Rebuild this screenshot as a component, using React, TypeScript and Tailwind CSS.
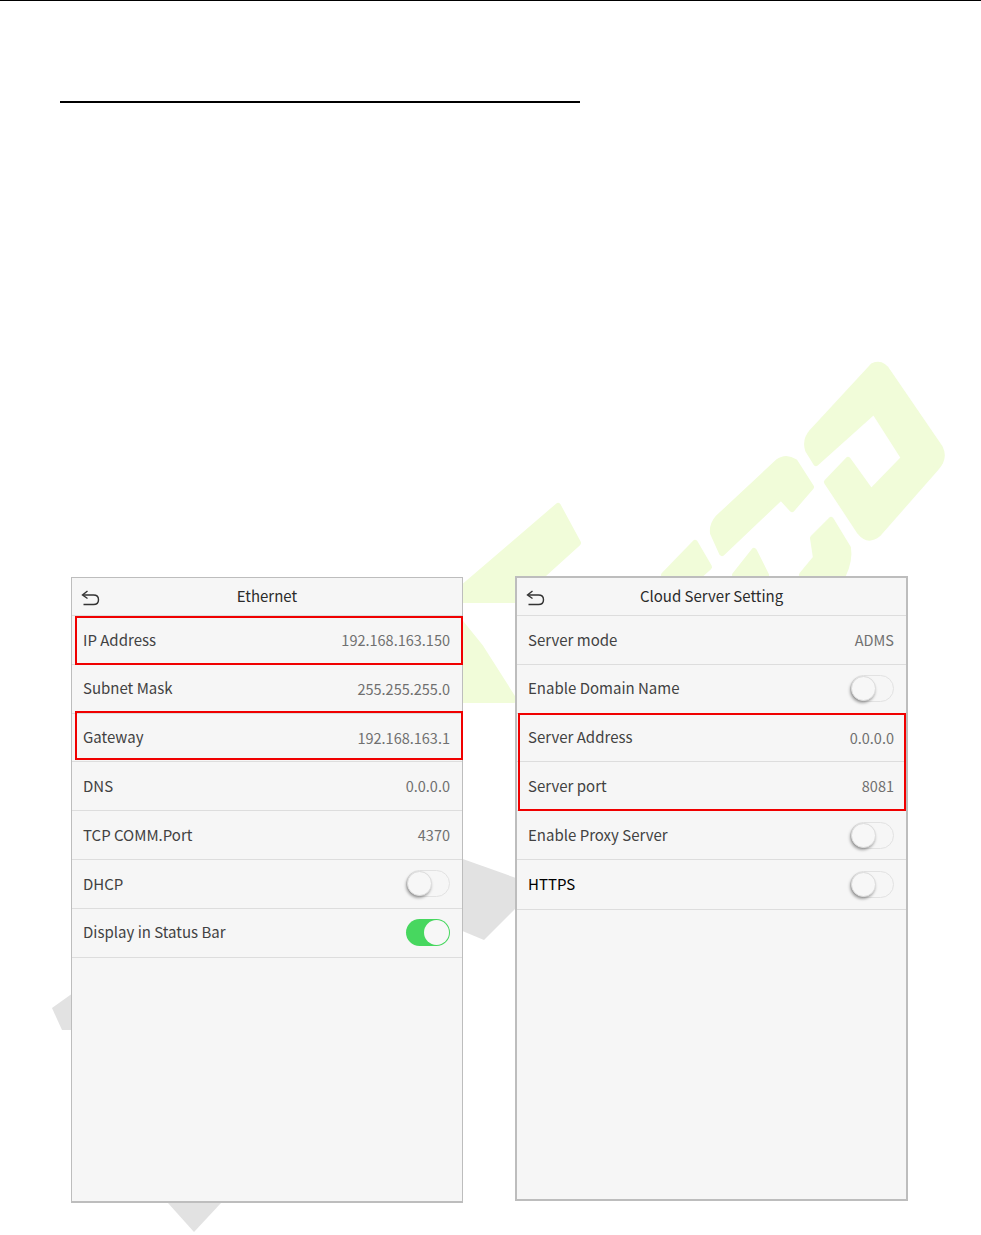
const font = { fontFamily: '"Noto Sans CJK SC", "Noto Sans", sans-serif' };

const ethernet: Row[] = [
  { label: "IP Address", value: "192.168.163.150" },
  { label: "Subnet Mask", value: "255.255.255.0" },
  { label: "Gateway", value: "192.168.163.1" },
  { label: "DNS", value: "0.0.0.0" },
  { label: "TCP COMM.Port", value: "4370" },
  { label: "DHCP", toggle: "off" },
  { label: "Display in Status Bar", toggle: "on" },
];

const cloud: Row[] = [
  { label: "Server mode", value: "ADMS" },
  { label: "Enable Domain Name", toggle: "off" },
  { label: "Server Address", value: "0.0.0.0" },
  { label: "Server port", value: "8081" },
  { label: "Enable Proxy Server", toggle: "off" },
  { label: "HTTPS", toggle: "off", tall: true },
];

type Row = { label: string; value?: string; toggle?: "on" | "off"; tall?: boolean };

const BackIcon = () => (
  <svg width="19" height="16" viewBox="0 0 19 16" fill="none" stroke="#333" strokeWidth="1.4">
    <path d="M6.5 1 L1.5 5 L6.5 8.5" />
    <path d="M2 5 H12.5 C15.5 5 17.5 7 17.5 9.7 C17.5 12.6 15.5 14.5 12.5 14.5 H2.5" />
  </svg>
);

const Toggle = ({ on }: { on: boolean }) =>
  on ? (
    <div className="w-[44px] h-[27px] rounded-full bg-[#47d75f] flex items-center justify-end pr-[1px]">
      <div className="w-[25px] h-[25px] rounded-full bg-[#f7f7f7]" />
    </div>
  ) : (
    <div className="w-[44px] h-[27px] rounded-full border border-[#e2e2e2] flex items-center">
      <div className="w-[25px] h-[25px] rounded-full bg-[#f7f7f7] border border-[#dcdcdc] shadow-[-1px_2px_3px_rgba(0,0,0,0.35)]" />
    </div>
  );

const Panel = ({ title, rows, className, rowH, children }: { title: string; rows: Row[]; className: string; rowH: string; children: React.ReactNode }) => (
  <div className={`relative border-[#bdbdbd] bg-[#f6f6f6] flex flex-col ${className}`} style={font}>
    <div className="relative h-[38px] shrink-0 border-b border-[#dddddd] flex items-center justify-center text-[15px] text-[#2b2b2b]">
      <div className="absolute left-[9px] top-[12px]">
        <BackIcon />
      </div>
      {title}
    </div>
    {rows.map((r) => (
      <div
        key={r.label}
        className={`${r.tall ? "h-[50px]" : rowH} shrink-0 border-b border-[#dddddd] flex items-center justify-between pl-[11px] pr-[12px] text-[15px] ${r.tall ? "text-black" : "text-[#424242]"}`}
      >
        <span>{r.label}</span>
        {r.value && <span className="text-[#707070] text-[14.5px]">{r.value}</span>}
        {r.toggle && <Toggle on={r.toggle === "on"} />}
      </div>
    ))}
    {children}
  </div>
);

const Watermark = () => (
  <svg className="absolute left-0 top-0" width="981" height="1235" viewBox="0 0 981 1235">
    <g fill="#f1fcd9" stroke="#f1fcd9" strokeWidth="6" strokeLinejoin="round">
      <path d="M558 506 L578 543 L515 600 L460 600 L460 590 Z" />
      <path d="M460 622 L481 648 L514 700 L460 700 Z" />
      <path d="M873 366 Q882 362 888 372 L940 448 Q945 458 936 468 L878 534 Q868 542 860 532 L827 482 L848 460 L871 492 L904 458 L874 411 L816 463 L808 450 Q805 440 812 432 Z" />
      <path d="M778 462 Q786 456 795 462 L811 487 L792 509 L781 497 L722 553 L713 533 Q712 525 718 518 Z" />
      <path d="M831 520 L848 548 Q850 560 843 575 L802 575 L816 558 L813 538 Z" />
      <path d="M754 551 L766 575 L735 575 Z" />
      <path d="M695 543 L709 567 L700 575 L664 575 Z" />
    </g>
    <g fill="#e2e2e2">
      <path d="M460 858 L516 878 L516 908 L484 940 L460 930 Z" />
      <path d="M52 1008 L73 993 L73 1030 L62 1030 Z" />
      <path d="M168 1203 L221 1203 L194 1232 Z" />
    </g>
  </svg>
);

export default function App() {
  return (
    <div className="relative w-[981px] h-[1235px] bg-white overflow-hidden">
      <Watermark />
      <div className="relative">
        <div className="h-[1px] bg-black" />
        <div className="ml-[60px] mt-[100px] w-[520px] h-[2px] bg-black" />
        <div className="flex items-start ml-[71px] mt-[473px]">
          <Panel
            title="Ethernet"
            rows={ethernet}
            rowH="h-[48.8px]"
            className="w-[392px] h-[626px] mt-[1px] border border-b-2"
          >
            <div className="absolute left-[3px] top-[38px] w-[388px] h-[49px] border-2 border-[#f00000]" />
            <div className="absolute left-[3px] top-[133px] w-[388px] h-[49px] border-2 border-[#f00000]" />
          </Panel>
          <Panel
            title="Cloud Server Setting"
            rows={cloud}
            rowH="h-[48.8px]"
            className="w-[393px] h-[625px] ml-[52px] border-2"
          >
            <div className="absolute left-[1px] top-[135px] w-[388px] h-[98px] border-2 border-[#f00000]" />
          </Panel>
        </div>
      </div>
    </div>
  );
}
